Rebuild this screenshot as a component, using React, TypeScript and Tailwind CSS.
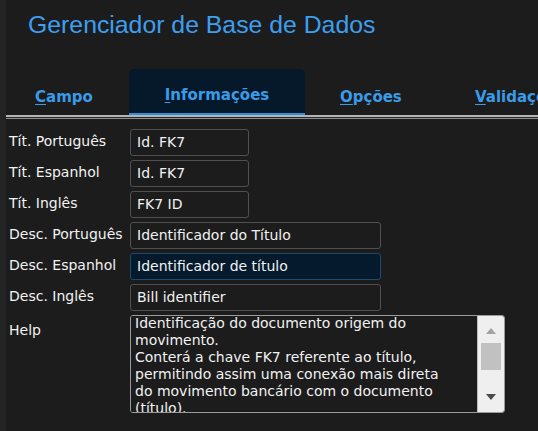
import React from 'react';

const FONT_UI = { fontFamily: '"DejaVu Sans", Verdana, sans-serif' };

type Row = { label: string; value: string; wide?: boolean; focused?: boolean };

const rows: Row[] = [
  { label: 'Tít. Português', value: 'Id. FK7' },
  { label: 'Tít. Espanhol', value: 'Id. FK7' },
  { label: 'Tít. Inglês', value: 'FK7 ID' },
  { label: 'Desc. Português', value: 'Identificador do Título', wide: true },
  { label: 'Desc. Espanhol', value: 'Identificador de título', wide: true, focused: true },
  { label: 'Desc. Inglês', value: 'Bill identifier', wide: true },
];

const helpLines = [
  'Identificação do documento origem do',
  'movimento.',
  'Conterá a chave FK7 referente ao título,',
  'permitindo assim uma conexão mais direta',
  'do movimento bancário com o documento',
  '(título).',
];

const TabLabel = ({ first, rest }: { first: string; rest: string }) => (
  <span>
    <span className="underline underline-offset-2">{first}</span>
    {rest}
  </span>
);

export default function App() {
  return (
    <div className="w-[538px] h-[431px] flex overflow-hidden bg-[#1c1c1c]" style={FONT_UI}>
      {/* left edge strip */}
      <div className="w-[6px] shrink-0 bg-[#242424]" />

      <div className="flex-1 flex flex-col min-w-0">
        {/* Title */}
        <div
          className="pl-[22px] pt-[10px] h-[69px] text-[24.8px] leading-[30px] text-[#3d9ff0]"
          style={{ fontFamily: '"Liberation Sans", Arial, sans-serif' }}
        >
          Gerenciador de Base de Dados
        </div>

        {/* Tabs */}
        <div className="flex h-[46px] text-[15px] font-bold text-[#3a9be8] whitespace-nowrap">
          <div className="w-[123px] shrink-0 pl-[29px] pt-[17px]">
            <TabLabel first="C" rest="ampo" />
          </div>
          <div className="w-[176px] shrink-0 rounded-t-[5px] bg-[#05192a] border-b-2 border-[#2c8fd8] flex justify-center pt-[15px]">
            <TabLabel first="I" rest="nformações" />
          </div>
          <div className="w-[135px] shrink-0 pl-[35px] pt-[17px]">
            <TabLabel first="O" rest="pções" />
          </div>
          <div className="shrink-0 pl-[35px] pt-[17px]">
            <TabLabel first="V" rest="alidações" />
          </div>
        </div>
        <div className="h-[2px] bg-[#b4b4b4]" />
        <div className="h-[1px] bg-[#2a2a2a]" />
        <div className="h-[1px] bg-[#8c8c8c]" />

        {/* Form */}
        <div className="flex flex-col gap-[4px] pt-[10px] text-[14px] text-[#f2f2f2]">
          {rows.map((r) => (
            <div key={r.label} className="flex items-center h-[27px]">
              <div className="w-[124px] shrink-0 pl-[3px] pb-[3px] whitespace-nowrap">{r.label}</div>
              <div
                className={
                  'h-[27px] rounded-[3px] border flex items-center pl-[6px] whitespace-nowrap ' +
                  (r.wide ? 'w-[251px] ' : 'w-[119px] ') +
                  (r.focused ? 'bg-[#051a2c] border-[#1e4a6c]' : 'bg-[#1c1c1c] border-[#505050]')
                }
              >
                {r.value}
              </div>
            </div>
          ))}

          {/* Help */}
          <div className="flex h-[98px]">
            <div className="w-[124px] shrink-0 pl-[3px] pt-[5px]">Help</div>
            <div className="w-[375px] h-[98px] flex rounded-[3px] border border-[#9a9a9a] overflow-hidden">
              <div className="flex-1 overflow-hidden bg-[#1c1c1c] pl-[4px]">
                <div className="-mt-[1px] leading-[17px] whitespace-nowrap">
                  {helpLines.map((l) => (
                    <div key={l}>{l}</div>
                  ))}
                </div>
              </div>
              <div className="w-[27px] shrink-0 bg-[#efefef] border-l border-[#bdbdbd] flex flex-col items-center">
                <svg width="10" height="6" viewBox="0 0 10 6" className="mt-[12px]">
                  <path d="M0 6 L5 0 L10 6 Z" fill="#a3a3a3" />
                </svg>
                <div className="w-[20px] h-[27px] bg-[#c1c1c1] mt-[9px]" />
                <div className="flex-1" />
                <svg width="10" height="6" viewBox="0 0 10 6" className="mb-[12px]">
                  <path d="M0 0 L10 0 L5 6 Z" fill="#4a4a4a" />
                </svg>
              </div>
            </div>
          </div>
        </div>
      </div>
    </div>
  );
}
